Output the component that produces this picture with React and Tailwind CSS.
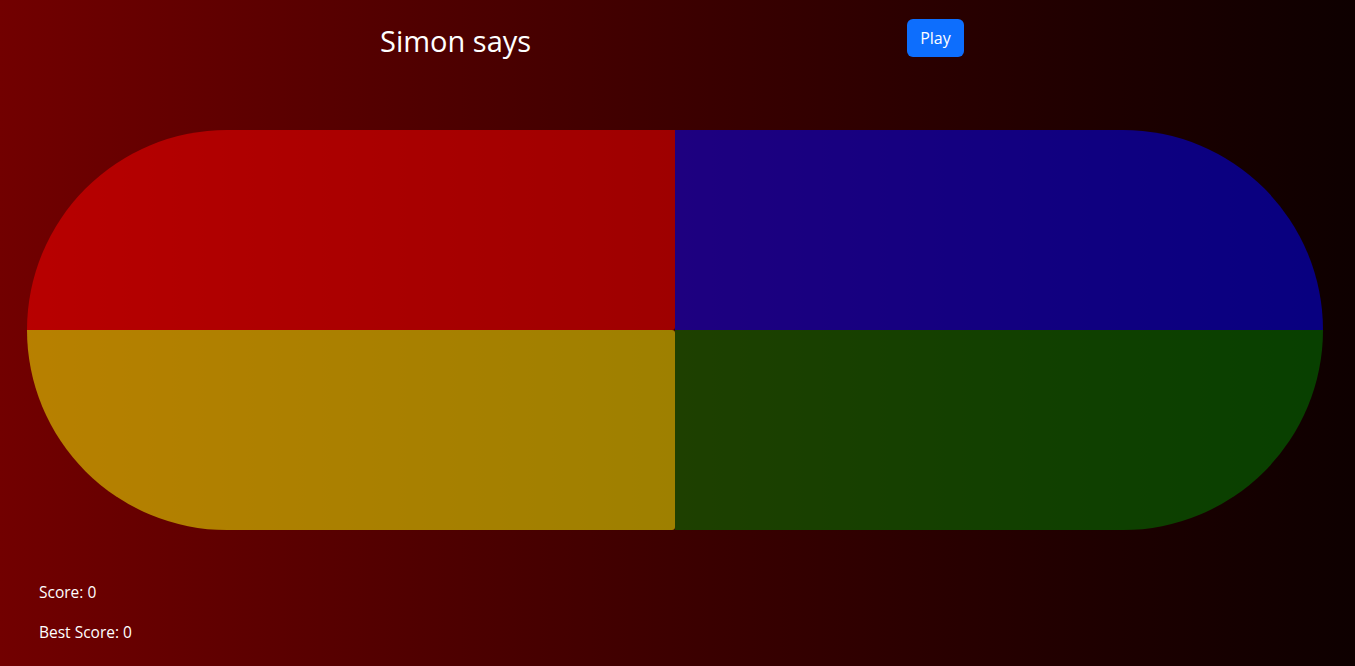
export default function App() {
  return (
    <div className="min-h-[666px] w-full bg-gradient-to-r from-[#720000] to-[#0e0000] text-white font-['Open_Sans',sans-serif]">
      {/* header */}
      <header className="flex items-start">
        <h1 className="ml-[380px] mt-[24px] text-[29px] leading-[34px] font-normal">Simon says</h1>
        <button className="ml-[376px] mt-[19px] h-[38px] px-[13px] rounded-[6px] bg-[#0d6efd] text-[16px] leading-6 text-white">
          Play
        </button>
      </header>

      {/* board */}
      <main className="pl-[27px] pt-[72px]">
        <div className="grid grid-cols-2 w-[1296px] h-[400px]">
          <div className="bg-[#ff0000]/50 rounded-tl-[200px] rounded-br-[3px]" />
          <div className="bg-[#0000ff]/50 rounded-tr-[200px]" />
          <div className="bg-[#ffff00]/50 rounded-bl-[200px] rounded-r-[3px]" />
          <div className="bg-[#008000]/50 rounded-br-[200px]" />
        </div>
      </main>

      {/* scores */}
      <div className="px-[39px] pt-[50px] text-[15.5px] leading-6">
        <p className="mb-4">Score: 0</p>
        <p>Best Score: 0</p>
      </div>
    </div>
  );
}
